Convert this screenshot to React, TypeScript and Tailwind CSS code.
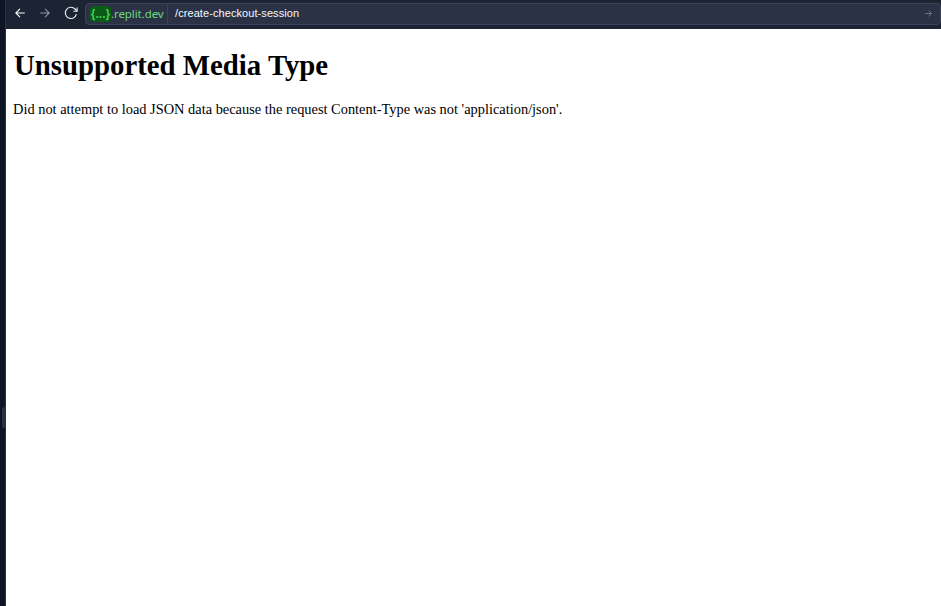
function BackIcon() {
  return (
    <svg width="10" height="10" viewBox="0 0 10 10" fill="none" stroke="currentColor" strokeWidth="1.2">
      <path d="M9.8 5H.9M5 .8.8 5 5 9.2" />
    </svg>
  );
}

function ForwardIcon({ size }: { size: number }) {
  return (
    <svg width={size} height={size} viewBox="0 0 10 10" fill="none" stroke="currentColor" strokeWidth="1.1">
      <path d="M.2 5h8.9M5 .8 9.2 5 5 9.2" />
    </svg>
  );
}

function ReloadIcon() {
  return (
    <svg width="14" height="14" viewBox="0 0 14 14" fill="none" stroke="currentColor" strokeWidth="1.15">
      <path d="M12.4 8.2A5.6 5.6 0 1 1 11 3l2 2" />
      <path d="M13.1 1.4v3.8H9.4" />
    </svg>
  );
}

function AddressBar() {
  return (
    <div className="mt-[3px] flex h-[22px] w-[856px] shrink-0 items-center rounded border border-[#3a4359] bg-[#2b3245]">
      <div className="flex h-full w-[82px] items-center border-r border-[#3a4359] pl-1 font-['Noto_Sans',sans-serif] text-[11.5px] leading-4 text-[#6cd97e]">
        <span className="flex h-4 w-[21px] items-center justify-center rounded bg-[#0b5a17] text-[12px] font-semibold text-[#45dc5c]">{'{...}'}</span>
        <span className="tracking-[-0.08px]">.replit.dev</span>
      </div>
      <span className="mb-[2px] ml-[7px] font-['Liberation_Sans',Arial,sans-serif] text-[11px] leading-4 tracking-[0.08px] text-[#f5f9fc]">
        /create-checkout-session
      </span>
      <span className="mr-2 mb-[2px] ml-auto text-[#828997]">
        <ForwardIcon size={7} />
      </span>
    </div>
  );
}

export default function App() {
  return (
    <div className="flex h-[606px] w-[941px] overflow-hidden bg-[#0e1525]">
      <div className="flex w-[6px] shrink-0 flex-col justify-start border-r border-[#2b3245] bg-[#0e1525] pt-[407px] pl-[2px]">
        <div className="h-[21px] w-[3px] rounded-sm bg-[#2b3245]" />
      </div>
      <div className="flex min-w-0 flex-1 flex-col">
        <header className="flex h-[29px] shrink-0 items-start bg-[#1c2333]">
          <div className="flex h-[26px] w-[79px] shrink-0 items-center pl-[9px]">
            <span className="text-[#f5f9fc]"><BackIcon /></span>
            <span className="ml-[15px] text-[#8f95a3]"><ForwardIcon size={10} /></span>
            <span className="ml-[14px] text-[#e6eaf0]"><ReloadIcon /></span>
          </div>
          <AddressBar />
        </header>
        <main className="flex-1 bg-white pl-[7px] font-['Liberation_Serif','Times_New_Roman',serif] text-black">
          <h1 className="mt-[20px] pl-px text-[28.8px] leading-[33px] font-bold">Unsupported Media Type</h1>
          <p className="mt-[19px] text-[14.4px] leading-4">
            Did not attempt to load JSON data because the request Content-Type was not 'application/json'.
          </p>
        </main>
      </div>
    </div>
  );
}
